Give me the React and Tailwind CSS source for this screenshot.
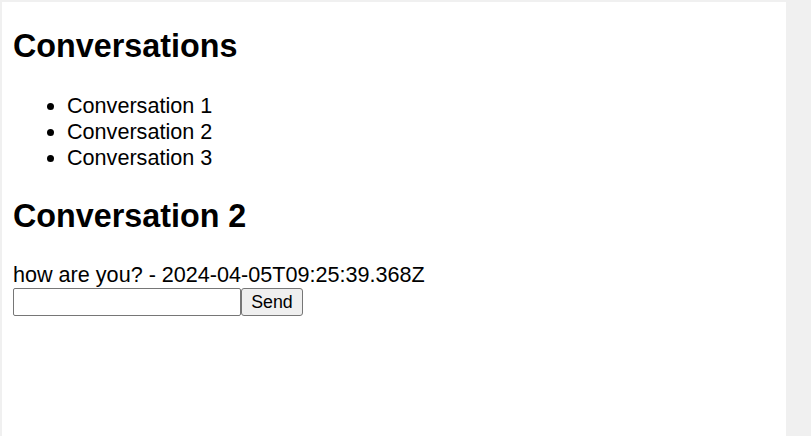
export default function App() {
  return (
    <div className="min-h-screen w-full bg-[#f0f0f0] pt-[2px] pl-[2px]" style={{ fontFamily: '"Liberation Sans", Arial, sans-serif' }}>
      <div className="w-[784px] h-[434px] bg-white pl-[11px] pt-[26px] text-black">
        <h1 className="text-[32.3px] leading-[37px] font-bold">Conversations</h1>
        <ul className="mt-[28px] list-disc pl-[54px] text-[21.6px] leading-[26px]">
          <li>Conversation 1</li>
          <li>Conversation 2</li>
          <li>Conversation 3</li>
        </ul>
        <h2 className="mt-[27px] text-[32.3px] leading-[37px] font-bold">Conversation 2</h2>
        <div className="mt-[27px] text-[21.6px] leading-[26px]">how are you? - 2024-04-05T09:25:39.368Z</div>
        <div className="flex items-start">
          <input type="text" className="w-[228px] h-[28px] border border-[#767676] rounded-[2px] bg-white px-[2px] text-[17.78px] outline-none" />
          <button className="h-[28px] w-[62px] border border-[#767676] rounded-[3px] bg-[#efefef] text-[17.78px] leading-[26px] text-black">Send</button>
        </div>
      </div>
    </div>
  );
}
